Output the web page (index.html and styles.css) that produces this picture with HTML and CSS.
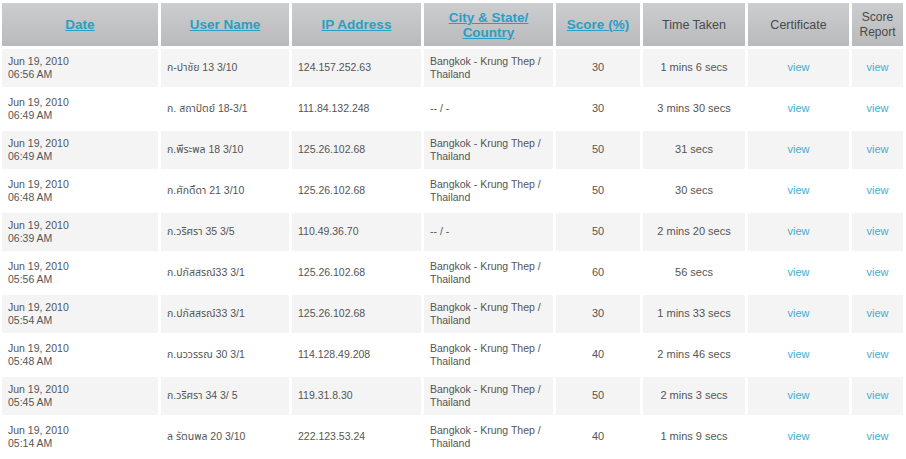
FILE: index.html
```html
<!DOCTYPE html>
<html>
<head>
<meta charset="utf-8">
<link rel="stylesheet" href="styles.css">
</head>
<body>
<table class="results">
  <colgroup>
    <col class="c-date"><col class="c-user"><col class="c-ip"><col class="c-city"><col class="c-score"><col class="c-time"><col class="c-cert"><col class="c-report">
  </colgroup>
  <thead>
    <tr>
      <th><a href="#" class="sort">Date</a></th>
      <th><a href="#" class="sort">User Name</a></th>
      <th><a href="#" class="sort">IP Address</a></th>
      <th><a href="#" class="sort">City &amp; State/<br>Country</a></th>
      <th><a href="#" class="sort">Score (%)</a></th>
      <th class="plain">Time Taken</th>
      <th class="plain">Certificate</th>
      <th class="plain small">Score<br>Report</th>
    </tr>
  </thead>
  <tbody>
    <tr class="odd"><td>Jun 19, 2010<br>06:56 AM</td><td>ก-ปาชัย 13 3/10</td><td>124.157.252.63</td><td>Bangkok - Krung Thep /<br>Thailand</td><td class="ctr">30</td><td class="ctr">1 mins 6 secs</td><td class="ctr"><a href="#" class="view">view</a></td><td class="ctr"><a href="#" class="view">view</a></td></tr>
    <tr><td>Jun 19, 2010<br>06:49 AM</td><td>ก. สถาปัตย์ 18-3/1</td><td>111.84.132.248</td><td>-- / -</td><td class="ctr">30</td><td class="ctr">3 mins 30 secs</td><td class="ctr"><a href="#" class="view">view</a></td><td class="ctr"><a href="#" class="view">view</a></td></tr>
    <tr class="odd"><td>Jun 19, 2010<br>06:49 AM</td><td>ก.พีระพล 18 3/10</td><td>125.26.102.68</td><td>Bangkok - Krung Thep /<br>Thailand</td><td class="ctr">50</td><td class="ctr">31 secs</td><td class="ctr"><a href="#" class="view">view</a></td><td class="ctr"><a href="#" class="view">view</a></td></tr>
    <tr><td>Jun 19, 2010<br>06:48 AM</td><td>ก.ศักดิ์ดา 21 3/10</td><td>125.26.102.68</td><td>Bangkok - Krung Thep /<br>Thailand</td><td class="ctr">50</td><td class="ctr">30 secs</td><td class="ctr"><a href="#" class="view">view</a></td><td class="ctr"><a href="#" class="view">view</a></td></tr>
    <tr class="odd"><td>Jun 19, 2010<br>06:39 AM</td><td>ก.วริศรา 35 3/5</td><td>110.49.36.70</td><td>-- / -</td><td class="ctr">50</td><td class="ctr">2 mins 20 secs</td><td class="ctr"><a href="#" class="view">view</a></td><td class="ctr"><a href="#" class="view">view</a></td></tr>
    <tr><td>Jun 19, 2010<br>05:56 AM</td><td>ก.ปภัสสรณ์33 3/1</td><td>125.26.102.68</td><td>Bangkok - Krung Thep /<br>Thailand</td><td class="ctr">60</td><td class="ctr">56 secs</td><td class="ctr"><a href="#" class="view">view</a></td><td class="ctr"><a href="#" class="view">view</a></td></tr>
    <tr class="odd"><td>Jun 19, 2010<br>05:54 AM</td><td>ก.ปภัสสรณ์33 3/1</td><td>125.26.102.68</td><td>Bangkok - Krung Thep /<br>Thailand</td><td class="ctr">30</td><td class="ctr">1 mins 33 secs</td><td class="ctr"><a href="#" class="view">view</a></td><td class="ctr"><a href="#" class="view">view</a></td></tr>
    <tr><td>Jun 19, 2010<br>05:48 AM</td><td>ก.นววรรณ 30 3/1</td><td>114.128.49.208</td><td>Bangkok - Krung Thep /<br>Thailand</td><td class="ctr">40</td><td class="ctr">2 mins 46 secs</td><td class="ctr"><a href="#" class="view">view</a></td><td class="ctr"><a href="#" class="view">view</a></td></tr>
    <tr class="odd"><td>Jun 19, 2010<br>05:45 AM</td><td>ก.วริศรา 34 3/ 5</td><td>119.31.8.30</td><td>Bangkok - Krung Thep /<br>Thailand</td><td class="ctr">50</td><td class="ctr">2 mins 3 secs</td><td class="ctr"><a href="#" class="view">view</a></td><td class="ctr"><a href="#" class="view">view</a></td></tr>
    <tr><td>Jun 19, 2010<br>05:14 AM</td><td>ล รัตนพล 20 3/10</td><td>222.123.53.24</td><td>Bangkok - Krung Thep /<br>Thailand</td><td class="ctr">40</td><td class="ctr">1 mins 9 secs</td><td class="ctr"><a href="#" class="view">view</a></td><td class="ctr"><a href="#" class="view">view</a></td></tr>
  </tbody>
</table>
</body>
</html>
```

FILE: styles.css
```css
html, body {
  margin: 0;
  padding: 0;
  background: #ffffff;
}

body {
  padding: 0 0 0 0;
}

.results {
  width: 904px;
  margin: 0 0 0 -1px;
  border-collapse: separate;
  border-spacing: 3px;
  table-layout: fixed;
  font-family: "Liberation Sans", Arial, "Noto Sans Thai", "Tahoma", sans-serif;
  font-size: 10.5px;
  color: #555555;
  border-bottom: 2px solid #d4d4d4;
}

.c-date { width: 156px; }
.c-user { width: 128px; }
.c-ip { width: 129px; }
.c-city { width: 129px; }
.c-score { width: 84px; }
.c-time { width: 102px; }
.c-cert { width: 101px; }
.c-report { width: 51px; }

.results th {
  height: 43px;
  padding: 0;
  background: linear-gradient(#cbcdcf, #b8babc);
  text-align: center;
  vertical-align: middle;
  font-weight: normal;
}

.sort {
  color: #2a9fc4;
  font-size: 13.5px;
  font-weight: bold;
  line-height: 15px;
  text-decoration: underline;
}

.plain {
  color: #4a4a4a;
  font-size: 12.5px;
}

.plain.small {
  font-size: 12px;
  line-height: 15px;
}

.results td {
  height: 38px;
  padding: 0 0 0 6px;
  line-height: 13.5px;
  vertical-align: middle;
  text-align: left;
}

.results tr.odd td {
  background: #f4f4f4;
}

.results td.ctr {
  text-align: center;
  padding: 0;
  font-size: 11px;
}

.view {
  color: #45add0;
  text-decoration: none;
  font-size: 11px;
}
```
